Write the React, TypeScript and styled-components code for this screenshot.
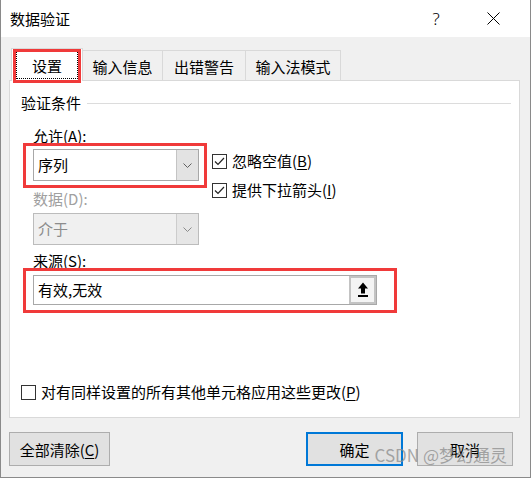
import React from "react";
import styled, { createGlobalStyle } from "styled-components";

const Global = createGlobalStyle`
  html, body { margin: 0; padding: 0; background: #ffffff; }
  body {
    font-family: "Noto Sans CJK SC", "Microsoft YaHei", sans-serif;
    font-size: 15px;
    color: #000;
  }
  * { box-sizing: border-box; }
  u { text-underline-offset: 2px; }
`;

const Window = styled.div`
  position: relative;
  width: 531px;
  height: 478px;
  display: flex;
  flex-direction: column;
  background: #f0f0f0;
  border-left: 1px solid #8a8a8a;
  border-right: 1px solid #8a8a8a;
  border-bottom: 1px solid #8a8a8a;
  overflow: hidden;
`;

const TitleBar = styled.div`
  height: 37px;
  flex: none;
  display: flex;
  align-items: center;
  background: #ffffff;
  padding-left: 9px;
`;

const Title = styled.div`
  line-height: 20px;
  flex: 1;
`;

const TitleControl = styled.div<{ $w: number }>`
  width: ${(p) => p.$w}px;
  height: 37px;
  display: flex;
  align-items: center;
  justify-content: center;
  font-family: "Noto Sans", "DejaVu Sans", sans-serif;
  font-size: 17px;
  font-weight: 300;
`;

const Body = styled.div`
  flex: 1;
  display: flex;
  flex-direction: column;
  padding: 11px 10px 10px 8px;
`;

const TabRow = styled.div`
  height: 32px;
  display: flex;
  align-items: flex-start;
  padding-left: 2px;
`;

const ActiveTab = styled.div`
  position: relative;
  z-index: 1;
  width: 72px;
  height: 33px;
  background: #fff;
  border: 1px solid #d9d9d9;
  border-bottom: none;
  display: flex;
  padding: 2px 4px 2px 4px;
  &::after {
    content: "";
    position: absolute;
    top: 0;
    left: 1px;
    right: 1px;
    bottom: -2px;
    border: 3px solid #f03a3a;
  }
`;

const FocusRect = styled.div`
  flex: 1;
  border: 1px dotted #000;
  display: flex;
  align-items: center;
  justify-content: center;
`;

const Tab = styled.div<{ $w: number }>`
  width: ${(p) => p.$w}px;
  height: 30px;
  margin-top: 2px;
  border-top: 1px solid #d9d9d9;
  border-right: 1px solid #d9d9d9;
  background: #f0f0f0;
  display: flex;
  align-items: center;
  justify-content: center;
  padding-top: 1px;
`;

const Panel = styled.div`
  height: 338px;
  flex: none;
  background: #fff;
  border: 1px solid #d9d9d9;
  display: flex;
  flex-direction: column;
  padding: 12px 8px 15px 11px;
`;

const GroupHeader = styled.div`
  display: flex;
  align-items: center;
  gap: 6px;
  height: 20px;
  line-height: 20px;
  &::after {
    content: "";
    flex: 1;
    height: 1px;
    background: #dcdcdc;
    margin-top: 1px;
  }
`;

const GroupBody = styled.div`
  margin-left: 12px;
  margin-top: 13px;
  display: flex;
  flex-direction: column;
`;

const TopArea = styled.div`
  display: flex;
  align-items: flex-start;
`;

const LeftCol = styled.div`
  width: 166px;
  display: flex;
  flex-direction: column;
`;

const RightCol = styled.div`
  margin-left: 13px;
  padding-top: 25px;
  display: flex;
  flex-direction: column;
  gap: 9px;
`;

const FieldLabel = styled.div<{ $disabled?: boolean; $mt?: number }>`
  height: 20px;
  line-height: 20px;
  margin-top: ${(p) => p.$mt ?? 0}px;
  color: ${(p) => (p.$disabled ? "#a0a0a0" : "#000")};
`;

const Highlight = styled.div<{ $t: number; $l: number; $r: number; $b: number }>`
  position: relative;
  &::after {
    content: "";
    position: absolute;
    pointer-events: none;
    top: ${(p) => -p.$t}px;
    left: ${(p) => -p.$l}px;
    right: ${(p) => -p.$r}px;
    bottom: ${(p) => -p.$b}px;
    border: 3px solid #f03a3a;
  }
`;

const Select = styled.div<{ $disabled?: boolean; $mt?: number }>`
  width: 166px;
  height: 32px;
  margin-top: ${(p) => p.$mt ?? 0}px;
  display: flex;
  border: 1px solid ${(p) => (p.$disabled ? "#bcbcbc" : "#a8a8a8")};
  background: ${(p) => (p.$disabled ? "#f0f0f0" : "#fff")};
  color: ${(p) => (p.$disabled ? "#8c8c8c" : "#000")};
`;

const SelectValue = styled.div`
  flex: 1;
  line-height: 30px;
  padding-left: 4px;
`;

const DropButton = styled.div<{ $disabled?: boolean }>`
  width: 22px;
  display: flex;
  align-items: center;
  justify-content: center;
  background: ${(p) => (p.$disabled ? "#e6e6e6" : "#e3e3e3")};
  border-left: 1px solid ${(p) => (p.$disabled ? "#cccccc" : "#c4c4c4")};
`;

const CheckRow = styled.label<{ $pushDown?: boolean }>`
  display: flex;
  align-items: center;
  gap: 5px;
  height: 20px;
  line-height: 20px;
  margin-top: ${(p) => (p.$pushDown ? "auto" : "0")};
`;

const Box = styled.span`
  width: 15px;
  height: 15px;
  border: 1px solid #333;
  background: #fff;
  display: flex;
  align-items: center;
  justify-content: center;
`;

const SourceInput = styled.div`
  width: 344px;
  height: 30px;
  border: 1px solid #a8a8a8;
  background: #fff;
  display: flex;
`;

const SourceValue = styled.div`
  flex: 1;
  line-height: 28px;
  padding-left: 4px;
`;

const RefButton = styled.div`
  width: 27px;
  border: 2px solid #c3c3c3;
  background: #f4f4f4;
  display: flex;
  align-items: center;
  justify-content: center;
`;

const ButtonRow = styled.div`
  margin-top: 14px;
  height: 34px;
  display: flex;
  gap: 14px;
  padding-right: 7px;
`;

const Button = styled.div<{ $w: number; $primary?: boolean; $push?: boolean }>`
  width: ${(p) => p.$w}px;
  height: 34px;
  margin-left: ${(p) => (p.$push ? "auto" : "0")};
  display: flex;
  align-items: center;
  justify-content: center;
  background: #e1e1e1;
  border: ${(p) => (p.$primary ? "2px solid #0078d7" : "1px solid #adadad")};
`;

const Watermark = styled.div`
  position: absolute;
  right: 23px;
  bottom: 11px;
  font-family: "Noto Sans CJK SC", sans-serif;
  font-size: 17px;
  line-height: 22px;
  color: rgba(140, 140, 140, 0.75);
  pointer-events: none;
  white-space: nowrap;
`;

const Chevron: React.FC<{ color: string }> = ({ color }) => (
  <svg width="9" height="5" viewBox="0 0 9 5">
    <polyline points="0.5,0.5 4.5,4.5 8.5,0.5" fill="none" stroke={color} strokeWidth="1" />
  </svg>
);

const Check: React.FC<{ checked: boolean }> = ({ checked }) => (
  <Box>
    {checked && (
      <svg width="13" height="13" viewBox="0 0 13 13">
        <polyline points="2,6.5 5,9.5 11,3" fill="none" stroke="#222" strokeWidth="1.2" />
      </svg>
    )}
  </Box>
);

const UploadArrow = () => (
  <svg width="12" height="16" viewBox="0 0 12 16">
    <path d="M6 0.5 L11 6.5 H8 V11.5 H4 V6.5 H1 Z" fill="#000" />
    <rect x="1" y="13" width="10" height="2" fill="#000" />
  </svg>
);

const CloseIcon = () => (
  <svg width="13" height="13" viewBox="0 0 13 13">
    <path d="M0.5 0.5 L12.5 12.5 M12.5 0.5 L0.5 12.5" stroke="#000" strokeWidth="1" fill="none" />
  </svg>
);

export default function App() {
  return (
    <>
      <Global />
      <Window>
        <TitleBar>
          <Title>数据验证</Title>
          <TitleControl $w={40}>?</TitleControl>
          <TitleControl $w={74}>
            <CloseIcon />
          </TitleControl>
        </TitleBar>
        <Body>
          <TabRow>
            <ActiveTab>
              <FocusRect>设置</FocusRect>
            </ActiveTab>
            <Tab $w={80}>输入信息</Tab>
            <Tab $w={83}>出错警告</Tab>
            <Tab $w={95}>输入法模式</Tab>
          </TabRow>
          <Panel>
            <GroupHeader>验证条件</GroupHeader>
            <GroupBody>
              <TopArea>
                <LeftCol>
                  <FieldLabel>
                    允许(<u>A</u>):
                  </FieldLabel>
                  <Highlight $t={6} $l={10} $r={8} $b={7} style={{ marginTop: 3 }}>
                    <Select>
                      <SelectValue>序列</SelectValue>
                      <DropButton>
                        <Chevron color="#606060" />
                      </DropButton>
                    </Select>
                  </Highlight>
                  <FieldLabel $disabled $mt={8}>
                    数据(D):
                  </FieldLabel>
                  <Select $disabled $mt={4}>
                    <SelectValue>介于</SelectValue>
                    <DropButton $disabled>
                      <Chevron color="#8a8a8a" />
                    </DropButton>
                  </Select>
                </LeftCol>
                <RightCol>
                  <CheckRow>
                    <Check checked />
                    <span>
                      忽略空值(<u>B</u>)
                    </span>
                  </CheckRow>
                  <CheckRow>
                    <Check checked />
                    <span>
                      提供下拉箭头(<u>I</u>)
                    </span>
                  </CheckRow>
                </RightCol>
              </TopArea>
              <FieldLabel $mt={6}>
                来源(<u>S</u>):
              </FieldLabel>
              <Highlight $t={7} $l={10} $r={20} $b={8} style={{ marginTop: 4, width: 344 }}>
                <SourceInput>
                  <SourceValue>有效,无效</SourceValue>
                  <RefButton>
                    <UploadArrow />
                  </RefButton>
                </SourceInput>
              </Highlight>
            </GroupBody>
            <CheckRow $pushDown>
              <Check checked={false} />
              <span>
                对有同样设置的所有其他单元格应用这些更改(<u>P</u>)
              </span>
            </CheckRow>
          </Panel>
          <ButtonRow>
            <Button $w={101}>
              <span>
                全部清除(<u>C</u>)
              </span>
            </Button>
            <Button $w={97} $primary $push>
              确定
            </Button>
            <Button $w={96}>取消</Button>
          </ButtonRow>
        </Body>
        <Watermark>CSDN @梦幻通灵</Watermark>
      </Window>
    </>
  );
}
